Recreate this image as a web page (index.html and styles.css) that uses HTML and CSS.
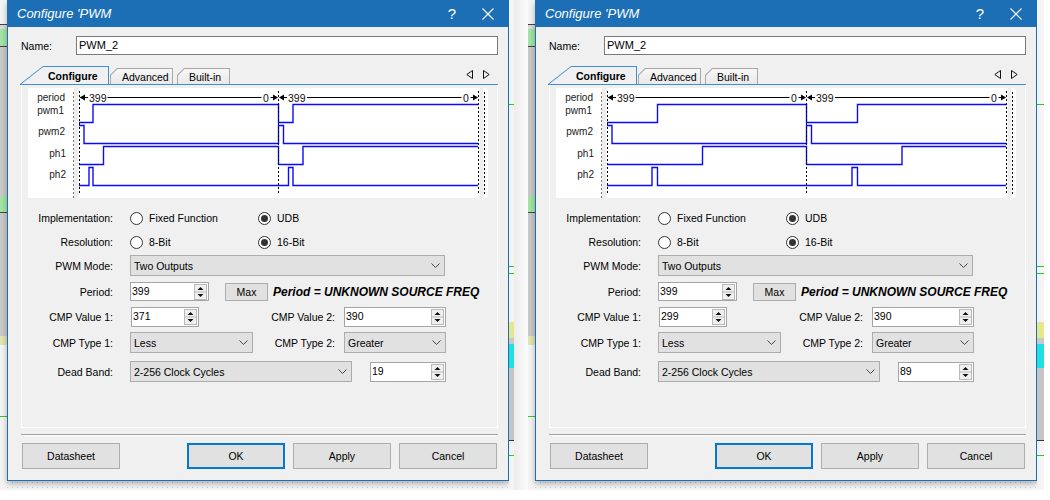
FILE: index.html
```html
<!DOCTYPE html>
<html>
<head>
<meta charset="utf-8">
<link rel="stylesheet" href="styles.css">
</head>
<body>
<div class="screen screen-a">
  <div class="strip-l"></div>
  <div class="dialog">
    <div class="titlebar">
      <span class="title">Configure 'PWM</span>
      <span class="help">?</span>
      <svg class="close" width="12" height="12" viewBox="0 0 12 12"><path d="M0.5 0.5 L11.5 11.5 M11.5 0.5 L0.5 11.5" stroke="#fff" stroke-width="1.1" fill="none"/></svg>
    </div>
    <div class="name-row">
      <span class="name-lbl">Name:</span>
      <div class="textbox">PWM_2</div>
    </div>
    <div class="tabs">
      <div class="tab tab-active"><div class="tab-in">Configure</div></div>
      <div class="tab tab-adv"><div class="tab-in">Advanced</div></div>
      <div class="tab tab-bi"><div class="tab-in">Built-in</div></div>
      <svg class="tab-arrows" width="24" height="10" viewBox="0 0 24 10"><path d="M6.5 0.5 L0.8 4.5 L6.5 8.5 Z M17.5 0.5 L23.2 4.5 L17.5 8.5 Z" fill="none" stroke="#111" stroke-width="1"/></svg>
    </div>
    <div class="tabpage">
      <svg class="chart" width="460" height="110" viewBox="0 0 460 110">
        <rect x="46" y="0" width="4.5" height="110" fill="#eeeeee"/>
        <rect x="451.5" y="0" width="4" height="110" fill="#eeeeee"/>
        <line x1="45.5" y1="4" x2="45.5" y2="110" class="dash-g"/>
        <line x1="456.5" y1="4" x2="456.5" y2="106" class="dash-k"/>
        <g class="lbl">
          <text x="37" y="13">period</text>
          <text x="36" y="26">pwm1</text>
          <text x="37" y="47">pwm2</text>
          <text x="38" y="69">ph1</text>
          <text x="38" y="90">ph2</text>
        </g>
        <g class="per">
          <polygon points="51.5,9.5 57,6.5 57,12.5"/>
          <line x1="57" y1="9.5" x2="60" y2="9.5"/>
          <line x1="79.5" y1="9.5" x2="233.5" y2="9.5"/>
          <line x1="242.5" y1="9.5" x2="246" y2="9.5"/>
          <polygon points="250,9.5 245,6.5 245,12.5"/>
          <polygon points="251,9.5 256,6.5 256,12.5"/>
          <line x1="256" y1="9.5" x2="259" y2="9.5"/>
          <line x1="279" y1="9.5" x2="433.5" y2="9.5"/>
          <line x1="442.5" y1="9.5" x2="446" y2="9.5"/>
          <polygon points="450,9.5 445,6.5 445,12.5"/>
        </g>
        <g class="num">
          <text x="61" y="13.5">399</text>
          <text x="235" y="13.5">0</text>
          <text x="260" y="13.5">399</text>
          <text x="435" y="13.5">0</text>
        </g>
        <g class="wave">
          <path d="M51,34.5 H65 V16.5 H250.5 V34.5 H265 V16.5 H450"/>
          <path d="M51,37.5 H56 V55.5 H250.5 V37.5 H255.5 V55.5 H450"/>
          <path d="M51,76.5 H75.5 V58.5 H250.5 V76.5 H275 V58.5 H450"/>
          <path d="M51,97.5 H61 V79.5 H65 V97.5 H260.5 V79.5 H265 V97.5 H450"/>
        </g>
        <line x1="51.5" y1="3" x2="51.5" y2="106" class="dash-k"/>
        <line x1="250.5" y1="3" x2="250.5" y2="106" class="dash-k"/>
        <line x1="450.5" y1="3" x2="450.5" y2="106" class="dash-k"/>
      </svg>
      <div class="form">
        <div class="row r1">
          <span class="lbl">Implementation:</span>
          <div class="ctl">
            <span class="opt"><span class="radio"></span>Fixed Function</span>
            <span class="opt"><span class="radio on"></span>UDB</span>
          </div>
        </div>
        <div class="row r2">
          <span class="lbl">Resolution:</span>
          <div class="ctl">
            <span class="opt"><span class="radio"></span>8-Bit</span>
            <span class="opt"><span class="radio on"></span>16-Bit</span>
          </div>
        </div>
        <div class="row r3">
          <span class="lbl">PWM Mode:</span>
          <div class="ctl">
            <div class="select w315"><span class="sel-txt">Two Outputs</span><svg class="chev" width="9" height="5" viewBox="0 0 9 5"><path d="M0.5 0.5 L4.5 4.5 L8.5 0.5" fill="none" stroke="#444" stroke-width="1"/></svg></div>
          </div>
        </div>
        <div class="row r4">
          <span class="lbl">Period:</span>
          <div class="ctl">
            <div class="spin w79"><span class="val">399</span><svg class="spin-btns" width="13" height="16" viewBox="0 0 13 16"><rect x="0.5" y="0.5" width="12" height="15" fill="#f0f0f0" stroke="#b9b9b9"/><line x1="0.5" y1="8" x2="12.5" y2="8" stroke="#b9b9b9"/><path d="M3.5 6 L9.5 6 L6.5 3 Z M3.5 10 L9.5 10 L6.5 13 Z" fill="#111"/></svg></div>
            <div class="btn-max">Max</div>
            <span class="freq">Period = UNKNOWN SOURCE FREQ</span>
          </div>
        </div>
        <div class="row r5">
          <span class="lbl">CMP Value 1:</span>
          <div class="ctl">
            <div class="spin w68 ml1"><span class="val">371</span><svg class="spin-btns" width="13" height="16" viewBox="0 0 13 16"><rect x="0.5" y="0.5" width="12" height="15" fill="#f0f0f0" stroke="#b9b9b9"/><line x1="0.5" y1="8" x2="12.5" y2="8" stroke="#b9b9b9"/><path d="M3.5 6 L9.5 6 L6.5 3 Z M3.5 10 L9.5 10 L6.5 13 Z" fill="#111"/></svg></div>
            <span class="lbl2 w136">CMP Value 2:</span>
            <div class="spin w102"><span class="val">390</span><svg class="spin-btns" width="13" height="16" viewBox="0 0 13 16"><rect x="0.5" y="0.5" width="12" height="15" fill="#f0f0f0" stroke="#b9b9b9"/><line x1="0.5" y1="8" x2="12.5" y2="8" stroke="#b9b9b9"/><path d="M3.5 6 L9.5 6 L6.5 3 Z M3.5 10 L9.5 10 L6.5 13 Z" fill="#111"/></svg></div>
          </div>
        </div>
        <div class="row r6">
          <span class="lbl">CMP Type 1:</span>
          <div class="ctl">
            <div class="select w123"><span class="sel-txt">Less</span><svg class="chev" width="9" height="5" viewBox="0 0 9 5"><path d="M0.5 0.5 L4.5 4.5 L8.5 0.5" fill="none" stroke="#444" stroke-width="1"/></svg></div>
            <span class="lbl2 w82">CMP Type 2:</span>
            <div class="select w102"><span class="sel-txt">Greater</span><svg class="chev" width="9" height="5" viewBox="0 0 9 5"><path d="M0.5 0.5 L4.5 4.5 L8.5 0.5" fill="none" stroke="#444" stroke-width="1"/></svg></div>
          </div>
        </div>
        <div class="row r7">
          <span class="lbl">Dead Band:</span>
          <div class="ctl">
            <div class="select w222"><span class="sel-txt">2-256 Clock Cycles</span><svg class="chev" width="9" height="5" viewBox="0 0 9 5"><path d="M0.5 0.5 L4.5 4.5 L8.5 0.5" fill="none" stroke="#444" stroke-width="1"/></svg></div>
            <div class="spin w76 ml18"><span class="val">19</span><svg class="spin-btns" width="13" height="16" viewBox="0 0 13 16"><rect x="0.5" y="0.5" width="12" height="15" fill="#f0f0f0" stroke="#b9b9b9"/><line x1="0.5" y1="8" x2="12.5" y2="8" stroke="#b9b9b9"/><path d="M3.5 6 L9.5 6 L6.5 3 Z M3.5 10 L9.5 10 L6.5 13 Z" fill="#111"/></svg></div>
          </div>
        </div>
      </div>
    </div>
    <div class="sep"></div>
    <div class="buttons">
      <div class="btn">Datasheet</div>
      <div class="btn btn-ok">OK</div>
      <div class="btn btn-gap">Apply</div>
      <div class="btn btn-gap">Cancel</div>
    </div>
  </div>
  <div class="strip-r"></div>
</div>
<div class="gap"></div>
<div class="screen screen-b">
  <div class="strip-l"></div>
  <div class="dialog">
    <div class="titlebar">
      <span class="title">Configure 'PWM</span>
      <span class="help">?</span>
      <svg class="close" width="12" height="12" viewBox="0 0 12 12"><path d="M0.5 0.5 L11.5 11.5 M11.5 0.5 L0.5 11.5" stroke="#fff" stroke-width="1.1" fill="none"/></svg>
    </div>
    <div class="name-row">
      <span class="name-lbl">Name:</span>
      <div class="textbox">PWM_2</div>
    </div>
    <div class="tabs">
      <div class="tab tab-active"><div class="tab-in">Configure</div></div>
      <div class="tab tab-adv"><div class="tab-in">Advanced</div></div>
      <div class="tab tab-bi"><div class="tab-in">Built-in</div></div>
      <svg class="tab-arrows" width="24" height="10" viewBox="0 0 24 10"><path d="M6.5 0.5 L0.8 4.5 L6.5 8.5 Z M17.5 0.5 L23.2 4.5 L17.5 8.5 Z" fill="none" stroke="#111" stroke-width="1"/></svg>
    </div>
    <div class="tabpage">
      <svg class="chart" width="460" height="110" viewBox="0 0 460 110">
        <rect x="46" y="0" width="4.5" height="110" fill="#eeeeee"/>
        <rect x="451.5" y="0" width="4" height="110" fill="#eeeeee"/>
        <line x1="45.5" y1="4" x2="45.5" y2="110" class="dash-g"/>
        <line x1="456.5" y1="4" x2="456.5" y2="106" class="dash-k"/>
        <g class="lbl">
          <text x="37" y="13">period</text>
          <text x="36" y="26">pwm1</text>
          <text x="37" y="47">pwm2</text>
          <text x="38" y="69">ph1</text>
          <text x="38" y="90">ph2</text>
        </g>
        <g class="per">
          <polygon points="51.5,9.5 57,6.5 57,12.5"/>
          <line x1="57" y1="9.5" x2="60" y2="9.5"/>
          <line x1="79.5" y1="9.5" x2="233.5" y2="9.5"/>
          <line x1="242.5" y1="9.5" x2="246" y2="9.5"/>
          <polygon points="250,9.5 245,6.5 245,12.5"/>
          <polygon points="251,9.5 256,6.5 256,12.5"/>
          <line x1="256" y1="9.5" x2="259" y2="9.5"/>
          <line x1="279" y1="9.5" x2="433.5" y2="9.5"/>
          <line x1="442.5" y1="9.5" x2="446" y2="9.5"/>
          <polygon points="450,9.5 445,6.5 445,12.5"/>
        </g>
        <g class="num">
          <text x="61" y="13.5">399</text>
          <text x="235" y="13.5">0</text>
          <text x="260" y="13.5">399</text>
          <text x="435" y="13.5">0</text>
        </g>
        <g class="wave">
          <path d="M51,34.5 H101.5 V16.5 H250.5 V34.5 H301.5 V16.5 H450"/>
          <path d="M51,37.5 H56 V55.5 H250.5 V37.5 H255.5 V55.5 H450"/>
          <path d="M51,76.5 H146.5 V58.5 H250.5 V76.5 H346 V58.5 H450"/>
          <path d="M51,97.5 H96 V79.5 H101.5 V97.5 H296 V79.5 H301.5 V97.5 H450"/>
        </g>
        <line x1="51.5" y1="3" x2="51.5" y2="106" class="dash-k"/>
        <line x1="250.5" y1="3" x2="250.5" y2="106" class="dash-k"/>
        <line x1="450.5" y1="3" x2="450.5" y2="106" class="dash-k"/>
      </svg>
      <div class="form">
        <div class="row r1">
          <span class="lbl">Implementation:</span>
          <div class="ctl">
            <span class="opt"><span class="radio"></span>Fixed Function</span>
            <span class="opt"><span class="radio on"></span>UDB</span>
          </div>
        </div>
        <div class="row r2">
          <span class="lbl">Resolution:</span>
          <div class="ctl">
            <span class="opt"><span class="radio"></span>8-Bit</span>
            <span class="opt"><span class="radio on"></span>16-Bit</span>
          </div>
        </div>
        <div class="row r3">
          <span class="lbl">PWM Mode:</span>
          <div class="ctl">
            <div class="select w315"><span class="sel-txt">Two Outputs</span><svg class="chev" width="9" height="5" viewBox="0 0 9 5"><path d="M0.5 0.5 L4.5 4.5 L8.5 0.5" fill="none" stroke="#444" stroke-width="1"/></svg></div>
          </div>
        </div>
        <div class="row r4">
          <span class="lbl">Period:</span>
          <div class="ctl">
            <div class="spin w79"><span class="val">399</span><svg class="spin-btns" width="13" height="16" viewBox="0 0 13 16"><rect x="0.5" y="0.5" width="12" height="15" fill="#f0f0f0" stroke="#b9b9b9"/><line x1="0.5" y1="8" x2="12.5" y2="8" stroke="#b9b9b9"/><path d="M3.5 6 L9.5 6 L6.5 3 Z M3.5 10 L9.5 10 L6.5 13 Z" fill="#111"/></svg></div>
            <div class="btn-max">Max</div>
            <span class="freq">Period = UNKNOWN SOURCE FREQ</span>
          </div>
        </div>
        <div class="row r5">
          <span class="lbl">CMP Value 1:</span>
          <div class="ctl">
            <div class="spin w68 ml1"><span class="val">299</span><svg class="spin-btns" width="13" height="16" viewBox="0 0 13 16"><rect x="0.5" y="0.5" width="12" height="15" fill="#f0f0f0" stroke="#b9b9b9"/><line x1="0.5" y1="8" x2="12.5" y2="8" stroke="#b9b9b9"/><path d="M3.5 6 L9.5 6 L6.5 3 Z M3.5 10 L9.5 10 L6.5 13 Z" fill="#111"/></svg></div>
            <span class="lbl2 w136">CMP Value 2:</span>
            <div class="spin w102"><span class="val">390</span><svg class="spin-btns" width="13" height="16" viewBox="0 0 13 16"><rect x="0.5" y="0.5" width="12" height="15" fill="#f0f0f0" stroke="#b9b9b9"/><line x1="0.5" y1="8" x2="12.5" y2="8" stroke="#b9b9b9"/><path d="M3.5 6 L9.5 6 L6.5 3 Z M3.5 10 L9.5 10 L6.5 13 Z" fill="#111"/></svg></div>
          </div>
        </div>
        <div class="row r6">
          <span class="lbl">CMP Type 1:</span>
          <div class="ctl">
            <div class="select w123"><span class="sel-txt">Less</span><svg class="chev" width="9" height="5" viewBox="0 0 9 5"><path d="M0.5 0.5 L4.5 4.5 L8.5 0.5" fill="none" stroke="#444" stroke-width="1"/></svg></div>
            <span class="lbl2 w82">CMP Type 2:</span>
            <div class="select w102"><span class="sel-txt">Greater</span><svg class="chev" width="9" height="5" viewBox="0 0 9 5"><path d="M0.5 0.5 L4.5 4.5 L8.5 0.5" fill="none" stroke="#444" stroke-width="1"/></svg></div>
          </div>
        </div>
        <div class="row r7">
          <span class="lbl">Dead Band:</span>
          <div class="ctl">
            <div class="select w222"><span class="sel-txt">2-256 Clock Cycles</span><svg class="chev" width="9" height="5" viewBox="0 0 9 5"><path d="M0.5 0.5 L4.5 4.5 L8.5 0.5" fill="none" stroke="#444" stroke-width="1"/></svg></div>
            <div class="spin w76 ml18"><span class="val">89</span><svg class="spin-btns" width="13" height="16" viewBox="0 0 13 16"><rect x="0.5" y="0.5" width="12" height="15" fill="#f0f0f0" stroke="#b9b9b9"/><line x1="0.5" y1="8" x2="12.5" y2="8" stroke="#b9b9b9"/><path d="M3.5 6 L9.5 6 L6.5 3 Z M3.5 10 L9.5 10 L6.5 13 Z" fill="#111"/></svg></div>
          </div>
        </div>
      </div>
    </div>
    <div class="sep"></div>
    <div class="buttons">
      <div class="btn">Datasheet</div>
      <div class="btn btn-ok">OK</div>
      <div class="btn btn-gap">Apply</div>
      <div class="btn btn-gap">Cancel</div>
    </div>
  </div>
  <div class="strip-r"></div>
</div>
</body>
</html>
```
FILE: styles.css
```css
* { box-sizing: border-box; }
html, body { margin: 0; padding: 0; }
body {
  width: 1050px; height: 500px; overflow: hidden;
  background: #fff;
  display: flex; align-items: flex-start;
  font-family: "Liberation Sans", Arial, sans-serif;
  font-size: 10.5px; color: #000;
}
.screen {
  display: flex; align-items: flex-start; height: 490px;
  background-color: #f6f6f6;
  background-image: radial-gradient(circle, #cfcfcf 0.7px, transparent 1px);
  background-size: 5px 5px;
}
.screen-a { width: 514px; }
.screen-b { width: 516px; }
.gap { width: 14px; height: 490px; background: linear-gradient(to right, #ececec, #fcfcfc); }
.strip-l {
  width: 7px; height: 100%; flex: none;
  background: linear-gradient(to bottom,
    #f4f4f4 0 24px, #444 24px 25px, #d9d9d9 25px 29px, #a3e3a3 29px 46px, #444 46px 47px,
    #c8c8c8 47px 196px, #a3e3a3 196px 212px, #444 212px 213px, #c8c8c8 213px 336px,
    #e4e4b0 336px 345px, #f4f4f4 345px 416px, #2ecc2e 416px 417px, #f4f4f4 417px 490px);
}
.strip-r {
  flex: 1; height: 100%;
  background: linear-gradient(to bottom,
    #f4f4f4 0 104px, #22cc22 104px 105px, #f4f4f4 105px 266px, #22cc22 266px 267px,
    #f4f4f4 267px 273px, #22cc22 273px 274px, #f4f4f4 274px 322px, #e6e68a 322px 338px,
    #c8c8c8 338px 344px, #1ee0e0 344px 368px, #c4c4c4 368px 440px, #333 440px 441px,
    #f4f4f4 441px 455px, #22cc22 455px 456px, #f4f4f4 456px 490px);
}

.dialog {
  width: 502px; height: 481px; flex: none;
  background: #f0f0f0;
  border: 1px solid #1c6fb5; border-top: 0;
  box-shadow: 0 3px 6px rgba(0,0,0,0.28);
  display: flex; flex-direction: column;
}
.titlebar {
  height: 27px; flex: none;
  background: #1c6fb5; color: #fff;
  display: flex; align-items: center;
  padding-left: 9px;
}
.title { flex: 1; font-style: italic; font-size: 13px; }
.help { width: 20px; text-align: center; font-size: 15px; }
.close { margin-left: 20px; margin-right: 14px; display: block; }

.name-row {
  margin-top: 9px; height: 19px; flex: none;
  display: flex; align-items: center;
  padding-left: 13px; padding-right: 10px;
}
.name-lbl { width: 55px; }
.textbox {
  flex: 1; height: 19px;
  border: 1px solid #7a7a7a; background: #fff;
  padding-left: 2px; font-size: 11px; line-height: 17px;
}

.tabs {
  margin: 11px 10px 0 12px; height: 19px; flex: none;
  border-bottom: 1px solid #3d8fd6;
  display: flex; align-items: flex-end;
}
.tab { padding: 1px 1px 0 1px; flex: none; }
.tab-in { height: 100%; display: flex; align-items: center; }
.tab-active {
  width: 89px; height: 18px; background: #3d8fd6;
  clip-path: polygon(0 100%, 23px 0, 100% 0, 100% 100%);
}
.tab-active .tab-in {
  background: #f0f0f0; font-weight: bold; padding-left: 27px;
  clip-path: polygon(0.4px 100%, 22px 0, 100% 0, 100% 100%);
}
.tab-adv, .tab-bi {
  height: 16px; background: #a8a8a8;
  clip-path: polygon(0 100%, 0 7px, 7px 0, 100% 0, 100% 100%);
}
.tab-adv { width: 63px; margin-left: 1px; }
.tab-bi { width: 53px; margin-left: 4px; }
.tab-adv .tab-in, .tab-bi .tab-in {
  background: linear-gradient(#f7f7f7, #e9e9e9);
  padding-left: 11px;
  clip-path: polygon(0 100%, 0 6.5px, 6.5px 0, 100% 0, 100% 100%);
}
.tab-arrows { margin-left: auto; margin-right: 8px; align-self: flex-start; margin-top: 4px; display: block; }

.tabpage {
  margin: 0 10px 0 13px; height: 343px; flex: none;
  border: 1px solid #fff; border-top: 0;
  padding: 3px 0 0 6px;
}
.chart { display: block; background: #fff; }
.chart .lbl { font-family: "Liberation Sans", Arial, sans-serif; font-size: 10px; fill: #1a1a1a; text-anchor: end; }
.chart .num { font-family: "Liberation Sans", Arial, sans-serif; font-size: 10.5px; fill: #111; }
.chart .per line { stroke: #000; stroke-width: 1; }
.chart .per polygon { fill: #000; }
.chart .wave path { fill: none; stroke: #0a0aff; stroke-width: 1.4; }
.dash-k { stroke: #000; stroke-width: 1; stroke-dasharray: 2 2; }
.dash-g { stroke: #7a7a7a; stroke-width: 1; stroke-dasharray: 2 2; }

.form { margin-left: -6px; margin-top: 11px; display: flex; flex-direction: column; }
.row { display: flex; align-items: center; flex: none; }
.r1 { height: 18px; }
.r2 { height: 18px; margin-top: 6px; }
.r3 { height: 21px; margin-top: 4px; }
.r4 { height: 19px; margin-top: 6px; }
.r5 { height: 20px; margin-top: 6px; }
.r6 { height: 21px; margin-top: 5px; }
.r7 { height: 21px; margin-top: 8px; }
.row .lbl { width: 91px; text-align: right; flex: none; }
.ctl { margin-left: 17px; display: flex; align-items: center; height: 100%; }
.opt { display: flex; align-items: center; width: 128px; }
.radio {
  width: 13px; height: 13px; border-radius: 50%;
  border: 1px solid #333; background: #fff;
  margin-right: 6px; flex: none;
  display: flex; align-items: center; justify-content: center;
}
.radio.on::after { content: ""; width: 7px; height: 7px; border-radius: 50%; background: #333; }

.select {
  height: 21px; border: 1px solid #adadad; background: #e1e1e1;
  display: flex; align-items: center; padding-left: 3px; flex: none;
}
.sel-txt { flex: 1; }
.chev { margin-right: 4px; display: block; }
.w315 { width: 315px; }
.w123 { width: 123px; }
.w102 { width: 102px; }
.w222 { width: 222px; }
.w79 { width: 79px; }
.w68 { width: 68px; }
.w76 { width: 76px; }
.ml1 { margin-left: 1px; }
.ml18 { margin-left: 18px; }

.spin {
  height: 19px; border: 1px solid #a5a5a5; background: #fff;
  display: flex; align-items: center; padding-left: 1px; flex: none;
}
.r5 .spin { height: 20px; }
.r7 .spin { height: 20px; }
.spin .val { flex: 1; margin-top: -2px; }
.spin-btns { margin-right: 1px; display: block; }

.btn-max {
  width: 43px; height: 18px; margin-left: 16px;
  border: 1px solid #adadad; background: #e1e1e1;
  display: flex; align-items: center; justify-content: center;
}
.freq { margin-left: 5px; font-weight: bold; font-style: italic; font-size: 12px; white-space: nowrap; }
.lbl2 { text-align: right; margin-right: 9px; flex: none; }
.w136 { width: 136px; }
.w82 { width: 82px; }

.sep {
  margin: 6px 10px 0 13px; height: 2px; flex: none;
  border-top: 1px solid #a0a0a0; border-bottom: 1px solid #fff;
}
.buttons { margin-top: 7px; padding-left: 14px; display: flex; flex: none; }
.btn {
  width: 98px; height: 26px;
  border: 1px solid #adadad; background: #e1e1e1;
  display: flex; align-items: center; justify-content: center;
}
.btn-ok { margin-left: 67px; border: 2px solid #0078d7; }
.btn-gap { margin-left: 8px; }
```
